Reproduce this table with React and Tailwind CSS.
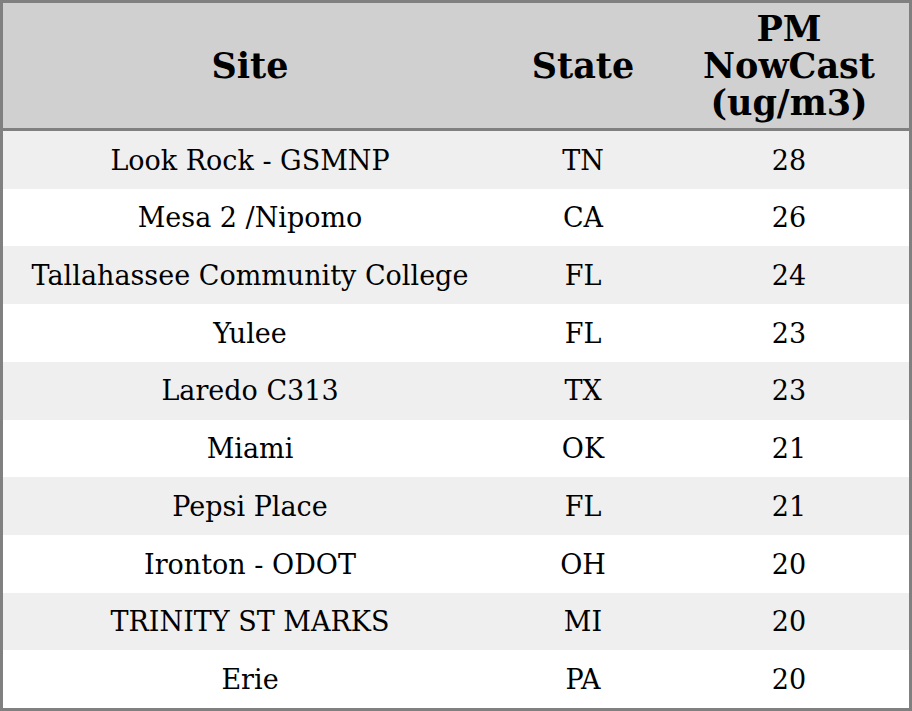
import React from 'react';

const rows = [
  { site: 'Look Rock - GSMNP', state: 'TN', pm: 28 },
  { site: 'Mesa 2 /Nipomo', state: 'CA', pm: 26 },
  { site: 'Tallahassee Community College', state: 'FL', pm: 24 },
  { site: 'Yulee', state: 'FL', pm: 23 },
  { site: 'Laredo C313', state: 'TX', pm: 23 },
  { site: 'Miami', state: 'OK', pm: 21 },
  { site: 'Pepsi Place', state: 'FL', pm: 21 },
  { site: 'Ironton - ODOT', state: 'OH', pm: 20 },
  { site: 'TRINITY ST MARKS', state: 'MI', pm: 20 },
  { site: 'Erie', state: 'PA', pm: 20 },
];

const App = () => {
  return (
    <div className="w-[912px] h-[711px] bg-white text-black font-['DejaVu_Serif',serif]">
      <div className="h-full flex flex-col border-[3px] border-[#808080]">
        {/* Header */}
        <div className="h-[128px] flex-shrink-0 grid grid-cols-[494px_172px_240px] items-center bg-[#d0d0d0] border-b-[3px] border-[#808080] text-[35px] leading-[37px] font-bold text-center">
          <div>Site</div>
          <div>State</div>
          <div>
            PM
            <br />
            NowCast
            <br />
            (ug/m3)
          </div>
        </div>

        {/* Body rows */}
        {rows.map((r, i) => (
          <div
            key={r.site}
            className={`flex-1 grid grid-cols-[494px_172px_240px] items-center pt-[2px] text-center text-[27px] ${
              i % 2 === 0 ? 'bg-[#efefef]' : 'bg-white'
            }`}
          >
            <div>{r.site}</div>
            <div>{r.state}</div>
            <div>{r.pm}</div>
          </div>
        ))}
      </div>
    </div>
  );
};

export default App;
